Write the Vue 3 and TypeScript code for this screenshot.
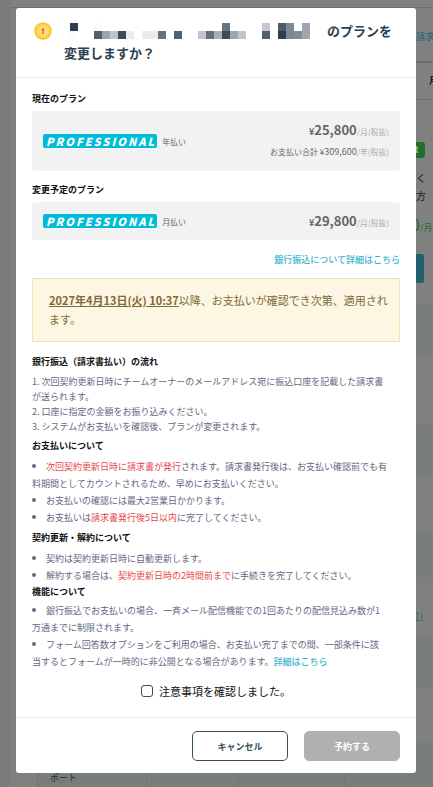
<script setup lang="ts">
import { ref } from 'vue'

interface Plan {
  heading: string
  cycle: string
  monthly: string
  yearly?: string
}

const plans: Plan[] = [
  { heading: '現在のプラン', cycle: '年払い', monthly: '25,800', yearly: '309,600' },
  { heading: '変更予定のプラン', cycle: '月払い', monthly: '29,800' },
]

// Masked team name: 30 columns by 2 rows, keyed by column.
const maskRows: Record<number, string>[] = [
  { 0: '#2c3e50', 3: '#f9fafd', 19: '#697582', 24: '#c4c8d0', 26: '#4c5a69', 27: '#7f8892', 29: '#9fa7b1' },
  {
    0: '#fcfcfc', 3: '#50606f', 4: '#9da4ae', 5: '#c0c3cc', 6: '#3c4c5c', 7: '#ebeced',
    9: '#eaebed', 10: '#ebecee', 11: '#65727f', 13: '#50606f', 16: '#c0c4cc', 17: '#65707d',
    18: '#a9afb9', 19: '#3c4c5c', 20: '#9ea5af', 21: '#c0c4cc', 24: '#50606f', 26: '#2c3e50',
    27: '#7f8892', 28: '#838c96', 29: '#9ea7b1',
  },
]
const maskCells: string[] = maskRows.flatMap((row) =>
  Array.from({ length: 30 }, (_, i) => row[i] ?? 'transparent'),
)

const confirmed = ref(false)
</script>

<template>
  <div class="screen">
    <div class="behind">
      <div class="behind-left"></div>
      <div class="behind-main">
        <div class="behind-right">
          <div class="strip-link">請求</div>
          <div class="strip-tab">月</div>
          <div class="strip-plan">
            <span class="strip-badge">R</span>
            <span class="strip-text">く<br />方</span>
            <span class="strip-price"><b>0</b>/月</span>
            <span class="strip-button"></span>
          </div>
          <div class="strip-row shade"></div>
          <div class="strip-row tall"></div>
          <div class="strip-row shade"></div>
          <div class="strip-row"></div>
          <div class="strip-row shade"></div>
          <div class="strip-row last"><a href="#">り)</a></div>
          <div class="strip-row shade"></div>
          <div class="strip-row"></div>
          <div class="strip-row shade"></div>
        </div>
        <div class="behind-table">
          <span class="cell">ポート</span><span class="cell"></span><span class="cell"></span><span class="cell"></span>
        </div>
      </div>
    </div>

    <section class="modal" role="dialog" aria-labelledby="dialog-title">
      <header class="head">
        <svg class="coin" viewBox="0 0 18 18">
          <circle cx="9" cy="9" r="8.7" fill="#ffc31f" />
          <circle cx="9" cy="9" r="7" fill="#ffdc6a" />
          <circle cx="9" cy="9" r="5.8" fill="none" stroke="#ffc94a" stroke-width="1" stroke-dasharray="1.5 1" />
          <circle cx="9" cy="9" r="4.4" fill="#ffe08a" />
          <path d="M9 5.6 11.2 8.2H9.9V12H8.1V8.2H6.8Z" fill="#ff7a12" />
        </svg>
        <h1 id="dialog-title" class="title">
          <span class="title-line">
            <span class="mask">
              <i v-for="(c, i) in maskCells" :key="i" :style="{ background: c }"></i>
            </span>
            <span>のプランを</span>
          </span>
          <span class="title-line">変更しますか？</span>
        </h1>
      </header>

      <div class="body">
        <div v-for="p in plans" :key="p.heading" class="plan">
          <h2>{{ p.heading }}</h2>
          <div class="card">
            <div class="name">
              <span class="badge">PROFESSIONAL</span>
              <span class="cycle">{{ p.cycle }}</span>
            </div>
            <div class="prices">
              <div class="monthly"><small>¥</small><b>{{ p.monthly }}</b><span class="unit">/月(税抜)</span></div>
              <div v-if="p.yearly" class="yearly">お支払い合計 ¥<span class="sum">{{ p.yearly }}</span><span class="unit">/年(税抜)</span></div>
            </div>
          </div>
        </div>

        <a class="bank-link" href="#">銀行振込について詳細はこちら</a>

        <p class="notice"><b>2027年4月13日(火) 10:37</b>以降、お支払いが確認でき次第、適用されます。</p>

        <section class="terms flow-terms">
          <h2>銀行振込（請求書払い）の流れ</h2>
          <ol>
            <li>1. 次回契約更新日時にチームオーナーのメールアドレス宛に振込口座を記載した請求書が送られます。</li>
            <li>2. 口座に指定の金額をお振り込みください。</li>
            <li>3. システムがお支払いを確認後、プランが変更されます。</li>
          </ol>
        </section>
        <section class="terms">
          <h2>お支払いについて</h2>
          <ul>
            <li><em>次回契約更新日時に請求書が発行</em>されます。請求書発行後は、お支払い確認前でも有料期間としてカウントされるため、早めにお支払いください。</li>
            <li>お支払いの確認には最大2営業日かかります。</li>
            <li>お支払いは<em>請求書発行後5日以内</em>に完了してください。</li>
          </ul>
        </section>
        <section class="terms">
          <h2>契約更新・解約について</h2>
          <ul>
            <li>契約は契約更新日時に自動更新します。</li>
            <li>解約する場合は、<em>契約更新日時の2時間前まで</em>に手続きを完了してください。</li>
          </ul>
        </section>
        <section class="terms last">
          <h2>機能について</h2>
          <ul>
            <li>銀行振込でお支払いの場合、一斉メール配信機能での1回あたりの配信見込み数が1万通までに制限されます。</li>
            <li>フォーム回答数オプションをご利用の場合、お支払い完了までの間、一部条件に該当するとフォームが一時的に非公開となる場合があります。<a href="#">詳細はこちら</a></li>
          </ul>
        </section>

        <label class="confirm" for="confirm">
          <input id="confirm" v-model="confirmed" type="checkbox" />
          <span>注意事項を確認しました。</span>
        </label>
      </div>

      <footer class="foot">
        <button type="button" class="btn cancel">キャンセル</button>
        <button type="button" class="btn submit" :disabled="!confirmed">予約する</button>
      </footer>
    </section>
  </div>
</template>

<style>
body {
  background: #808080;
}
</style>

<style scoped>
.screen {
  position: relative;
  min-height: 100vh;
  box-sizing: border-box;
  padding: 8px 17px 12px 16px;
  overflow: hidden;
  background: #808080;
  font-family: "Noto Sans CJK JP", "Noto Sans", sans-serif;
  font-size: 9px;
}
h1, h2, p, ol, ul {
  margin: 0;
  padding: 0;
}
a {
  text-decoration: none;
}

/* Dimmed page under the dialog */
.behind {
  position: absolute;
  inset: 0;
  display: flex;
}
.behind-left {
  width: 10px;
  background: #7b7b7e;
}
.behind-main {
  flex: 1;
  display: flex;
  flex-direction: column;
  margin-top: 7px;
  border-top: 1px solid #6d6d6d;
}
.behind-right {
  flex: 1;
  min-height: 0;
  align-self: flex-end;
  width: 17px;
  overflow: hidden;
  white-space: nowrap;
}
.strip-link {
  height: 53px;
  line-height: 58px;
  color: #1f5f70;
  border-bottom: 1px solid #6d6d6d;
}
.strip-tab {
  height: 36px;
  line-height: 36px;
  padding-left: 13px;
  font-weight: 700;
  color: #111;
  border-top: 1px solid #6d6d6d;
  border-bottom: 1px solid #6d6d6d;
}
.strip-plan {
  display: flex;
  flex-direction: column;
  height: 203px;
  color: #2a2a3c;
}
.strip-badge {
  width: 9px;
  height: 16px;
  margin-top: 42px;
  line-height: 16px;
  text-indent: -4px;
  border-radius: 0 3px 3px 0;
  background: #237029;
  color: #9bb89d;
  font-weight: 900;
}
.strip-text {
  margin-top: 11px;
  font-size: 10px;
  font-weight: 500;
  line-height: 18px;
}
.strip-price {
  display: flex;
  align-items: baseline;
  margin-left: -5px;
  margin-top: 9px;
  line-height: 20px;
  color: #266c35;
}
.strip-price b {
  font-size: 16px;
  font-weight: 400;
}
.strip-button {
  width: 8px;
  height: 29px;
  margin-top: 16px;
  border-radius: 0 2px 2px 0;
  background: #23606f;
}
.strip-row {
  height: 53px;
}
.strip-row.tall {
  height: 68px;
}
.strip-row.shade {
  background: #797d7c;
}
.strip-row.last {
  line-height: 66px;
}
.strip-row a {
  margin-left: -5px;
  color: #1f5f70;
  text-decoration: underline;
}
.behind-table {
  display: grid;
  grid-template-columns: 109px 92px 106px 1fr;
  height: 18px;
  margin-left: 27px;
  background: #797d7c;
}
.cell {
  padding-left: 12px;
  line-height: 18px;
  border-left: 1px solid #727678;
  color: #1b2c3c;
}

/* Dialog */
.modal {
  position: relative;
  border-radius: 3px;
  background: #fff;
}
.head {
  display: flex;
  gap: 12px;
  padding: 12px 16px 13px 18px;
  border-bottom: 1px solid #ececee;
}
.coin {
  flex: none;
  width: 18px;
  height: 18px;
  margin-top: 2px;
}
.title {
  flex: 1;
  font-size: 13px;
  line-height: 22px;
  color: #2c3e50;
}
.title-line {
  display: flex;
  align-items: center;
  gap: 17px;
  white-space: nowrap;
}
.mask {
  display: grid;
  grid-template-columns: repeat(30, 8px);
  grid-auto-rows: 8px;
  margin-left: 6px;
}
.body {
  padding: 13px 16px 17px;
}
h2 {
  font-size: 9px;
  line-height: 16px;
  color: #111;
}
.plan + .plan {
  margin-top: 11px;
}
.card {
  display: flex;
  align-items: center;
  justify-content: space-between;
  margin-top: 4px;
  padding: 8px 11px;
  border-radius: 3px;
  background: #f2f2f2;
  color: #666;
}
.name {
  display: flex;
  align-items: center;
  gap: 5px;
}
.badge {
  padding: 0 1px 0 3px;
  border-radius: 2px;
  background: #00bcd9;
  color: #fff;
  font-size: 11px;
  font-style: italic;
  font-weight: 900;
  line-height: 14px;
  letter-spacing: 2px;
}
.cycle,
.yearly,
.unit {
  font-size: 8px;
}
.prices {
  text-align: right;
  line-height: 22px;
}
.monthly,
.yearly {
  height: 22px;
}
.monthly b {
  font-size: 13px;
}
.monthly small {
  font-size: 9px;
  font-weight: 700;
}
.unit {
  font-weight: 300;
  color: #888;
}
.sum {
  font-size: 9px;
}
.bank-link {
  display: block;
  margin-top: 12px;
  line-height: 16px;
  text-align: right;
}
.body a {
  color: #3db4d0;
  font-weight: 500;
}
.notice {
  margin-top: 10px;
  padding: 12px 8px 12px 16px;
  border: 1px solid #f0e2ae;
  background: #fdf6e2;
  color: #7c6a38;
  font-size: 11px;
  line-height: 19px;
}
.notice b {
  text-decoration: underline;
}
.terms {
  margin-top: 4px;
  color: #666680;
}
.terms.flow-terms {
  margin-top: 12px;
}
.terms.last {
  margin-top: 0;
}
.terms ol,
.terms ul {
  margin-top: 4px;
  padding-right: 10px;
  list-style: none;
}
.terms.last ul {
  margin-top: 2px;
  padding-right: 16px;
}
.terms ol {
  line-height: 15px;
}
.terms ul {
  line-height: 17px;
}
.terms ul li::before {
  content: "";
  display: inline-block;
  width: 4px;
  height: 4px;
  margin-right: 10px;
  border-radius: 50%;
  background: #666680;
  vertical-align: 2px;
}
.terms em {
  font-style: normal;
  color: #e5484d;
}
.confirm {
  display: flex;
  align-items: center;
  justify-content: center;
  gap: 6px;
  margin-top: 12px;
  font-size: 11px;
  line-height: 18px;
  color: #111;
}
.confirm input {
  appearance: none;
  width: 12px;
  height: 12px;
  margin: 0;
  border: 1px solid #34505e;
  border-radius: 3px;
  background: #fff;
}
.confirm input:checked {
  background: #34505e;
}
.foot {
  display: flex;
  justify-content: flex-end;
  gap: 16px;
  padding: 13px 16px 12px;
  border-top: 1px solid #ececee;
}
.btn {
  width: 96px;
  height: 30px;
  padding: 0;
  border: 1px solid #34505e;
  border-radius: 5px;
  background: #fff;
  color: #34505e;
  font-family: inherit;
  font-size: 9px;
  font-weight: 700;
}
.btn.submit {
  border-color: #b0b0b0;
  background: #b0b0b0;
  color: #fff;
}
</style>
